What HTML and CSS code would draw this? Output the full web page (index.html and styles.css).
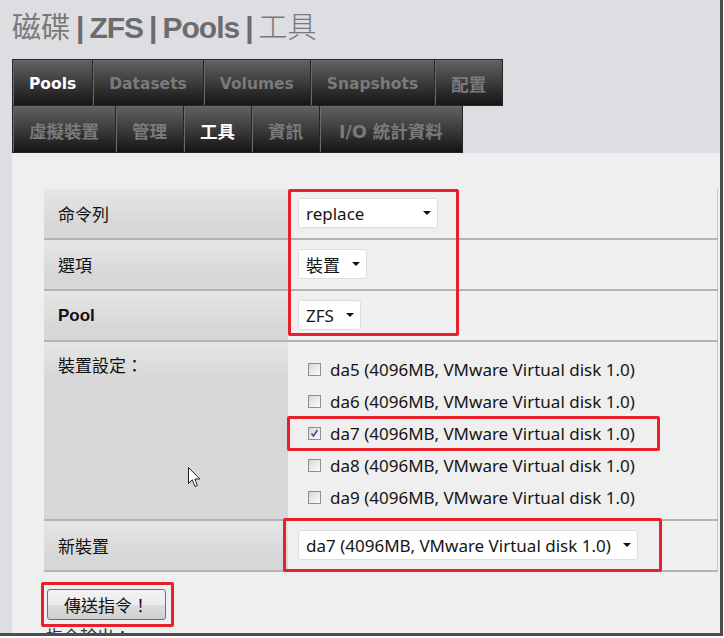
FILE: index.html
```html
<!DOCTYPE html>
<html lang="zh-Hant">
<head>
    <meta charset="UTF-8">
    <meta name="viewport" content="width=device-width, initial-scale=1.0">
    <title>磁碟 | ZFS | Pools | 工具</title>
    <link rel="stylesheet" href="styles.css">
</head>
<body>
<div class="frame">
    <div class="header">
        <h1 class="crumb">
            <span class="crumb-cjk">磁碟</span><span class="sep">|</span>ZFS<span class="sep">|</span>Pools<span class="sep">|</span><span class="crumb-cjk crumb-light">工具</span>
        </h1>
    </div>

    <ul class="tabs">
        <li class="tab active">Pools</li>
        <li class="tab">Datasets</li>
        <li class="tab">Volumes</li>
        <li class="tab">Snapshots</li>
        <li class="tab cjk">配置</li>
    </ul>
    <ul class="tabs">
        <li class="tab cjk">虛擬裝置</li>
        <li class="tab cjk">管理</li>
        <li class="tab cjk active">工具</li>
        <li class="tab cjk">資訊</li>
        <li class="tab cjk tab-wide">I/O 統計資料</li>
    </ul>

    <div class="panel">
        <table class="form-table">
            <tr>
                <th class="label">命令列</th>
                <td class="field">
                    <div class="select select-cmd">replace<span class="caret"></span></div>
                </td>
            </tr>
            <tr>
                <th class="label">選項</th>
                <td class="field">
                    <div class="select">裝置<span class="caret"></span></div>
                </td>
            </tr>
            <tr>
                <th class="label label-bold">Pool</th>
                <td class="field">
                    <div class="select">ZFS<span class="caret"></span></div>
                </td>
            </tr>
            <tr>
                <th class="label label-top">裝置設定：</th>
                <td class="field field-list">
                    <ul class="disks">
                        <li class="disk"><span class="check"></span>da5 (4096MB, VMware Virtual disk 1.0)</li>
                        <li class="disk"><span class="check"></span>da6 (4096MB, VMware Virtual disk 1.0)</li>
                        <li class="disk">
                            <span class="check checked">
                                <svg width="11" height="11" viewBox="0 0 11 11"><polyline points="2.5,5.5 4.5,8 8.5,2" fill="none" stroke="#3d4e95" stroke-width="1.6"/></svg>
                            </span>da7 (4096MB, VMware Virtual disk 1.0)
                        </li>
                        <li class="disk"><span class="check"></span>da8 (4096MB, VMware Virtual disk 1.0)</li>
                        <li class="disk"><span class="check"></span>da9 (4096MB, VMware Virtual disk 1.0)</li>
                    </ul>
                </td>
            </tr>
            <tr>
                <th class="label">新裝置</th>
                <td class="field">
                    <div class="select">da7 (4096MB, VMware Virtual disk 1.0)<span class="caret"></span></div>
                </td>
            </tr>
        </table>

        <button class="btn">傳送指令！</button>
        <p class="output-label">指令輸出：</p>
    </div>

    <!-- annotation boxes drawn over the screenshot -->
    <div class="mark mark-pool"></div>
    <div class="mark mark-disk"></div>
    <div class="mark mark-new"></div>
    <div class="mark mark-btn"></div>

    <svg class="cursor" width="13" height="21" viewBox="0 0 13 21">
        <path d="M0.5 0.5 L0.5 16.5 L4.3 12.8 L7 19.5 L9.4 18.5 L6.8 12 L11.8 12 Z" fill="#fff" stroke="#222" stroke-width="1"/>
    </svg>
</div>
</body>
</html>
```

FILE: styles.css
```css
* {
    box-sizing: border-box;
}

body {
    margin: 0;
    background: #fff;
    font-family: "Noto Sans", "Noto Sans CJK TC", sans-serif;
}

.frame {
    position: relative;
    width: 723px;
    height: 636px;
    border-right: 3px solid #4d4d4d;
    border-bottom: 3px solid #4d4d4d;
    background: #dcdee2;
    overflow: hidden;
    display: flex;
    flex-direction: column;
}

.header {
    flex-shrink: 0;
    height: 59px;
    padding: 7px 12px 0;
}

.crumb {
    margin: 0;
    font-family: "Liberation Sans", "Noto Sans CJK TC", sans-serif;
    font-size: 30px;
    line-height: 36px;
    font-weight: bold;
    letter-spacing: -1px;
    color: #6c6c6c;
    white-space: nowrap;
}

.crumb-cjk {
    font-family: "Noto Sans CJK TC", sans-serif;
    font-size: 29px;
    font-weight: normal;
    letter-spacing: 0;
    color: #787878;
}

.crumb-light {
    font-weight: 300;
}

.sep {
    margin: 0 6px;
}

.tabs {
    flex-shrink: 0;
    display: flex;
    margin: 0 0 0 12px;
    padding: 0;
    list-style: none;
}

.tab {
    height: 47px;
    padding: 2px 16px 0;
    margin-right: -1px;
    display: flex;
    align-items: center;
    border: 1px solid #262626;
    box-shadow: inset 1px 1px 0 #6a6a6a;
    background: linear-gradient(to bottom, #626262 0%, #3c3c3c 50%, #151515 100%);
    font-family: "DejaVu Sans", "Noto Sans CJK TC", sans-serif;
    font-size: 15.5px;
    font-weight: bold;
    color: #7a7a7a;
    white-space: nowrap;
}

.tabs + .tabs .tab {
    border-top: none;
}

.tab.cjk {
    font-size: 17.5px;
}

.tab-wide {
    padding: 2px 19px 0;
}

.tab.active {
    color: #fff;
}

.panel {
    flex: 1;
    margin-left: 12px;
    padding: 36px 0 0 32px;
    background: #efefef;
}

.form-table {
    width: 674px;
    border-collapse: collapse;
    border-right: 1px solid #c8c8c8;
}

.form-table tr + tr {
    border-top: 2px solid #b3b3b3;
}

.form-table tr:last-child {
    border-bottom: 2px solid #b3b3b3;
}

.label {
    width: 244px;
    padding: 0 14px;
    text-align: left;
    vertical-align: middle;
    background: linear-gradient(to bottom, #e6e6e6, #d7d7d7 36px);
    font-family: "Noto Sans CJK TC", sans-serif;
    font-size: 17px;
    font-weight: normal;
    color: #111;
}

.label-bold {
    font-family: "Liberation Sans", sans-serif;
    font-weight: bold;
}

.label-top {
    vertical-align: top;
    padding-top: 10px;
}

.field {
    padding: 9px 10px 10px;
    vertical-align: middle;
}

.field-list {
    padding: 11px 20px 6px;
}

.select {
    display: inline-flex;
    align-items: center;
    gap: 12px;
    height: 30px;
    padding: 0 6px 0 7px;
    background: #fff;
    border: 1px solid #dedede;
    border-radius: 3px;
    font-size: 17px;
    color: #151515;
}

.select-cmd {
    width: 140px;
    justify-content: space-between;
}

.caret {
    width: 0;
    height: 0;
    border-left: 4px solid transparent;
    border-right: 4px solid transparent;
    border-top: 4px solid #111;
}

.disks {
    margin: 0;
    padding: 0;
    list-style: none;
}

.disk {
    height: 32px;
    display: flex;
    align-items: center;
    font-size: 17px;
    color: #151515;
}

.check {
    width: 13px;
    height: 13px;
    margin-right: 9px;
    border: 1px solid #8f8f8f;
    background: linear-gradient(135deg, #d8d8d8, #fbfbfb);
    display: flex;
    align-items: center;
    justify-content: center;
}

.btn {
    display: block;
    margin: 17px 0 0 3px;
    width: 119px;
    height: 31px;
    border: 1px solid #707070;
    border-radius: 3px;
    background: linear-gradient(to bottom, #f3f3f3 0%, #ebebeb 50%, #dddddd 51%, #cfcfcf 100%);
    font-family: "Noto Sans CJK TC", sans-serif;
    font-size: 17px;
    color: #111;
    padding: 0;
}

.output-label {
    margin: 3px 0 0 2px;
    font-family: "Noto Sans CJK TC", sans-serif;
    font-size: 17px;
    color: #333;
}

.mark {
    position: absolute;
    border: 3px solid #e8202b;
    border-radius: 2px;
}

.mark-pool { left: 288px; top: 189px; width: 171px; height: 147px; }
.mark-disk { left: 287px; top: 416px; width: 373px; height: 35px; }
.mark-new  { left: 283px; top: 518px; width: 379px; height: 54px; }
.mark-btn  { left: 41px;  top: 582px; width: 133px; height: 45px; }

.cursor {
    position: absolute;
    left: 188px;
    top: 467px;
}
```
